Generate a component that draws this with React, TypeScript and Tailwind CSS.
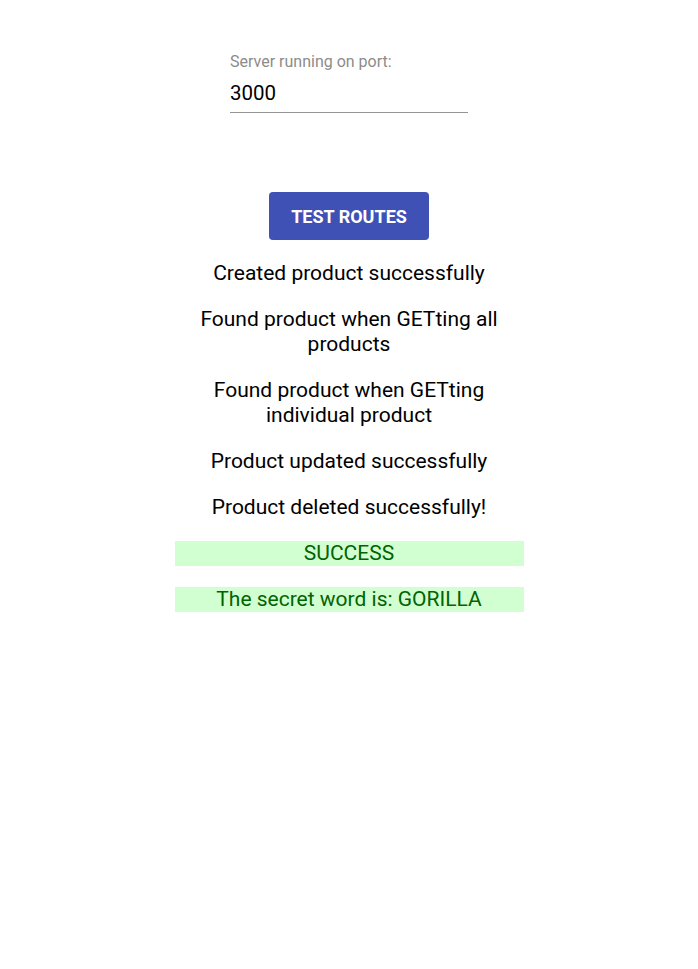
const results = [
  'Created product successfully',
  'Found product when GETting all products',
  'Found product when GETting individual product',
  'Product updated successfully',
  'Product deleted successfully!',
];

export default function App() {
  return (
    <div className="min-h-screen bg-white font-['Roboto',sans-serif] text-black">
      <div className="flex flex-col items-center pt-[51px]">
        <div className="flex w-[238px] flex-col">
          <label className="text-[16px] leading-[22px] text-[#8c8c8c]">Server running on port:</label>
          <input
            defaultValue="3000"
            className="mt-[6px] border-b border-[#949494] pb-[5px] text-[20.5px] leading-[28px] outline-none"
          />
        </div>

        <button className="mt-[79px] h-[48px] w-[160px] rounded-[4px] bg-[#3f51b5] text-[18px] font-bold uppercase text-white">
          Test Routes
        </button>

        <div className="mt-[21px] flex w-[349px] flex-col gap-[21px] text-center text-[21px] leading-[25px]">
          {results.map((r) => (
            <p key={r}>{r}</p>
          ))}
          <p className="bg-[#d1ffd1] text-[#006400]">SUCCESS</p>
          <p className="bg-[#d1ffd1] text-[#006400]">The secret word is: GORILLA</p>
        </div>
      </div>
    </div>
  );
}
